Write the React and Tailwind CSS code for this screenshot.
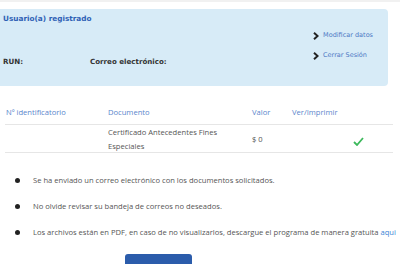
import React from "react";

function Chevron() {
  return (
    <svg width="6" height="8" viewBox="0 0 6 8" className="shrink-0">
      <path d="M1 0.8 L4.6 4 L1 7.2" fill="none" stroke="#222" strokeWidth="2" />
    </svg>
  );
}

export default function App() {
  return (
    <div className="w-[400px] h-[267px] overflow-hidden bg-white relative" style={{ fontFamily: '"Open Sans", sans-serif' }}>
      <div className="h-[2px] bg-[#f1f1f1]" />
      <div className="h-[7px]" />
      <div
        className="w-[388px] h-[77px] bg-[#d7ebf7] rounded-r-[4px] flex justify-between px-[3px] pt-[5px]"
        style={{ fontFamily: '"DejaVu Sans", Verdana, sans-serif' }}
      >
        <div className="flex flex-col">
          <div className="text-[7.3px] font-bold text-[#2f61b5] leading-[10px]">Usuario(a) registrado</div>
          <div className="flex mt-[33px] text-[7.1px] font-bold text-[#333] leading-[10px]">
            <span className="w-[87px]">RUN:</span>
            <span>Correo electrónico:</span>
          </div>
        </div>
        <div className="flex flex-col gap-[11px] pt-[17px] pr-[12px] text-[6.5px] text-[#4d78c4] leading-[9px]">
          <div className="flex items-center gap-[4px]"><Chevron />Modificar datos</div>
          <div className="flex items-center gap-[4px]"><Chevron />Cerrar Sesión</div>
        </div>
      </div>

      <div className="ml-[5px] w-[388px] mt-[21px]">
        <div className="grid grid-cols-[102px_144px_40px_1fr] text-[7.6px] text-[#5a86cc] leading-[10px] pb-[7px] pl-[1px] border-b border-[#e6e6e6]">
          <span>Nº identificatorio</span>
          <span>Documento</span>
          <span>Valor</span>
          <span>Ver/Imprimir</span>
        </div>
        <div className="grid grid-cols-[102px_144px_40px_1fr] items-center text-[7.6px] text-[#555] leading-[13.5px] pl-[1px] pt-[1px] h-[28px] border-b border-[#e6e6e6]">
          <span></span>
          <span className="pr-[20px]">Certificado Antecedentes Fines Especiales</span>
          <span>$ 0</span>
          <span className="flex justify-end pr-[29px] pt-[4px]">
            <svg width="11" height="9" viewBox="0 0 11 9">
              <path d="M1 5 L4 8 L10 1" fill="none" stroke="#3db95c" strokeWidth="1.8" />
            </svg>
          </span>
        </div>
      </div>

      <ul className="mt-[22px] flex flex-col gap-[16px] text-[7.6px] text-[#555] leading-[10px]">
        <li className="flex items-center"><span className="w-[5px] h-[5px] rounded-full bg-[#222] ml-[15px] mr-[13px]" />Se ha enviado un correo electrónico con los documentos solicitados.</li>
        <li className="flex items-center"><span className="w-[5px] h-[5px] rounded-full bg-[#222] ml-[15px] mr-[13px]" />No olvide revisar su bandeja de correos no deseados.</li>
        <li className="flex items-center whitespace-nowrap"><span className="w-[5px] h-[5px] rounded-full bg-[#222] ml-[15px] mr-[13px]" />Los archivos están en PDF, en caso de no visualizarlos, descargue el programa de manera gratuita&nbsp;<span className="text-[#3a86d6]">aqui</span></li>
      </ul>

      <div className="ml-[125px] mt-[17px] w-[67px] h-[10px] bg-[#2b5cab] rounded-t-[3px]" />
    </div>
  );
}
